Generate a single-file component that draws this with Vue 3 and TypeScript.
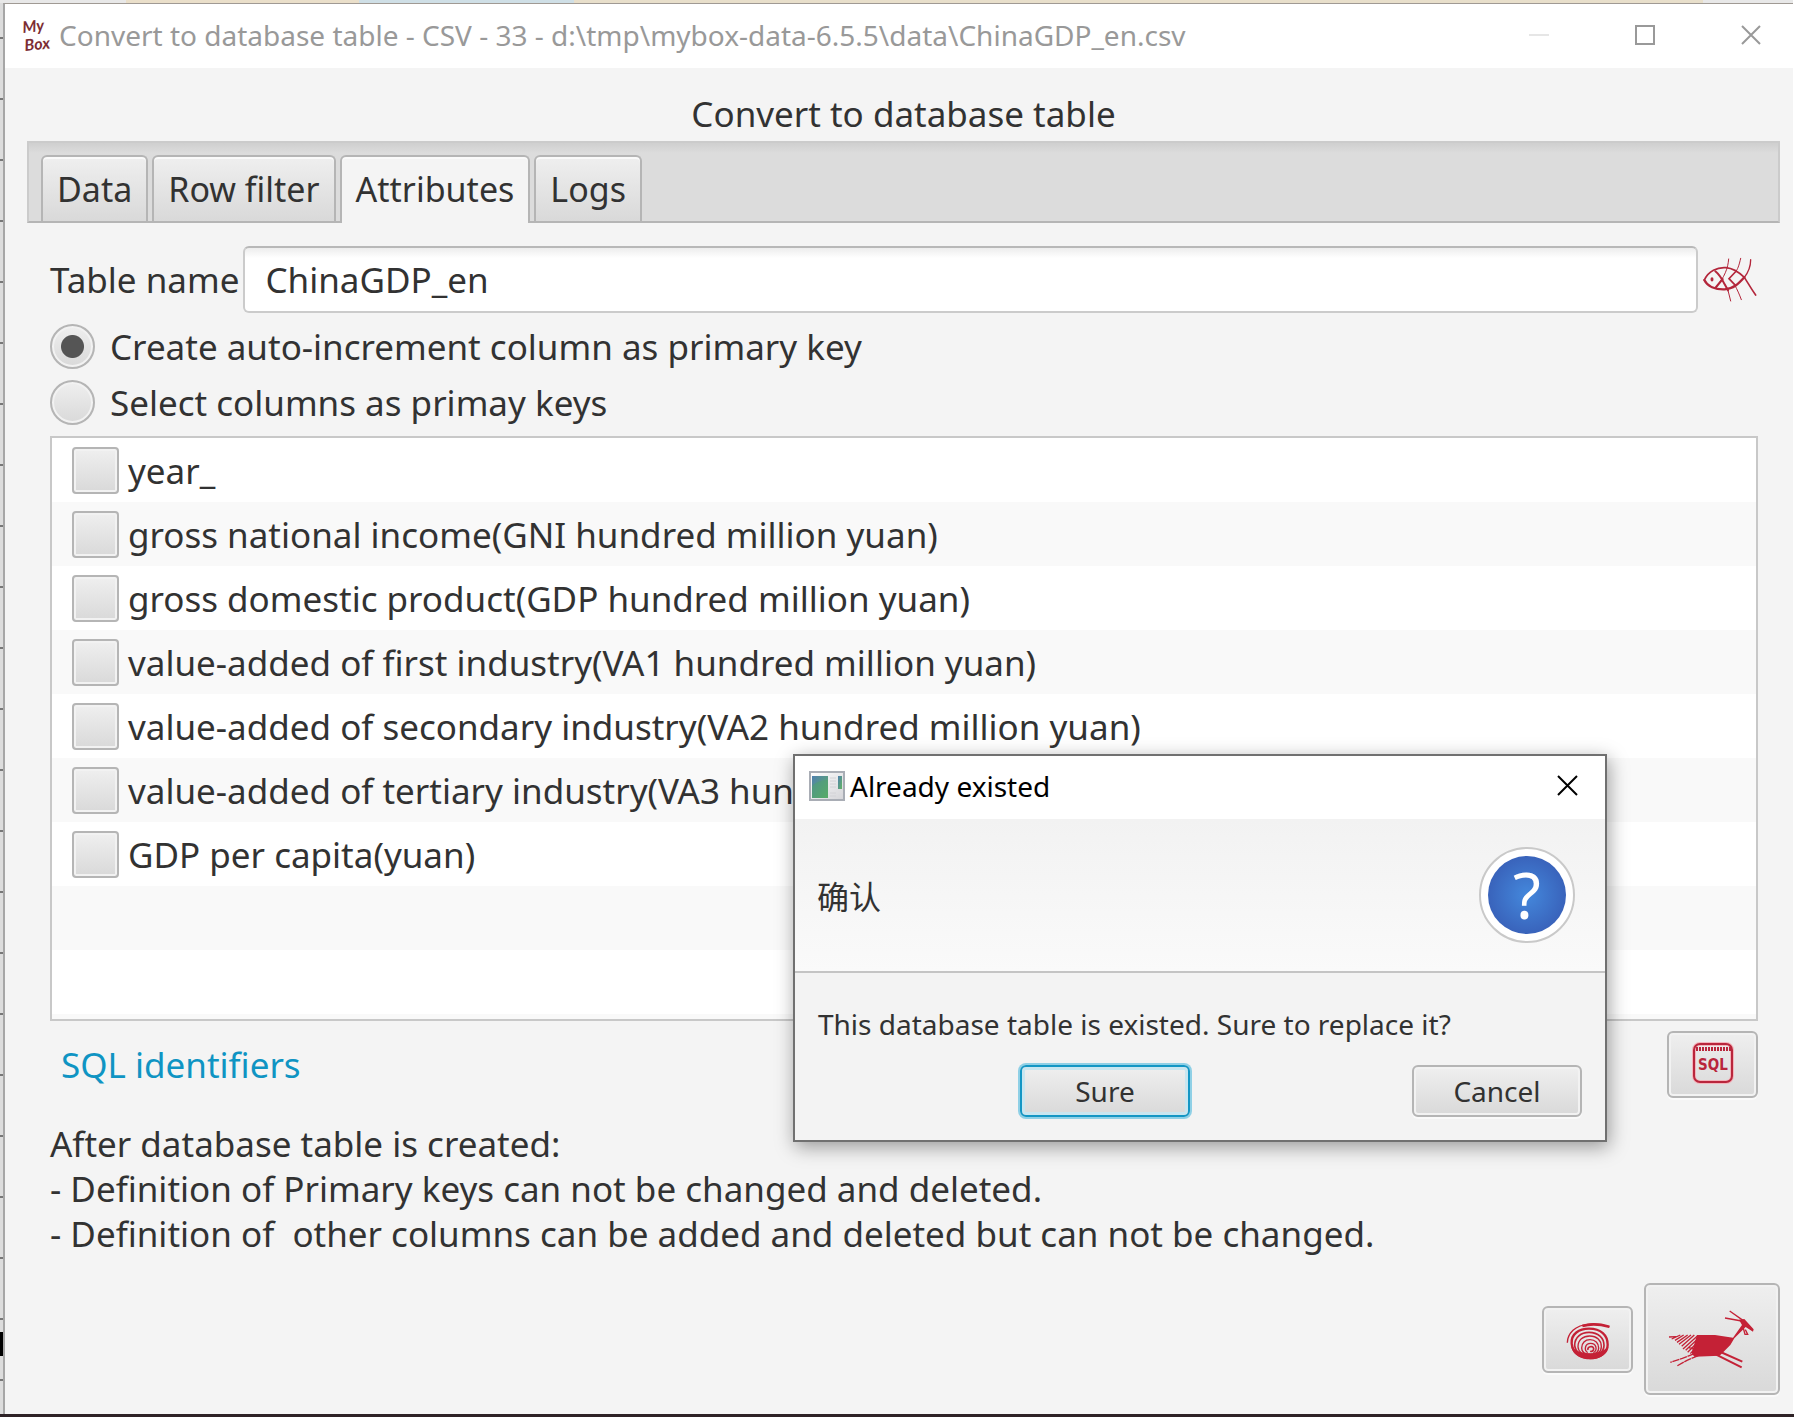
<script setup lang="ts">
import { ref } from 'vue'

interface Column {
  id: string
  label: string
}

const tabs: string[] = ['Data', 'Row filter', 'Attributes', 'Logs']
const activeTab = ref('Attributes')
const tableName = ref('ChinaGDP_en')
const keyMode = ref('auto')
const selected = ref<string[]>([])
const dialogOpen = ref(true)

const columns: Column[] = [
  { id: 'year', label: 'year_' },
  { id: 'gni', label: 'gross national income(GNI hundred million yuan)' },
  { id: 'gdp', label: 'gross domestic product(GDP hundred million yuan)' },
  { id: 'va1', label: 'value-added of first industry(VA1 hundred million yuan)' },
  { id: 'va2', label: 'value-added of secondary industry(VA2 hundred million yuan)' },
  { id: 'va3', label: 'value-added of tertiary industry(VA3 hundred million yuan)' },
  { id: 'capita', label: 'GDP per capita(yuan)' },
]

const notes = [
  'After database table is created:',
  '- Definition of Primary keys can not be changed and deleted.',
  '- Definition of  other columns can be added and deleted but can not be changed.',
].join('\n')
</script>

<template>
  <div class="desktop">
    <div class="behind-top"></div>
    <div class="behind-left"><i class="dark-mark"></i></div>
    <div class="window">
      <header class="titlebar">
        <svg class="logo" width="32" height="44" viewBox="0 0 32 44" aria-hidden="true">
          <g fill="#7c2d33" font-family="Lato, sans-serif" font-style="italic" font-weight="700">
            <text x="1" y="20" font-size="16" transform="rotate(-6 1 20)">My</text>
            <text x="3" y="38" font-size="16" transform="rotate(-6 3 38)">Box</text>
          </g>
        </svg>
        <span class="window-title">Convert to database table - CSV - 33 - d:\tmp\mybox-data-6.5.5\data\ChinaGDP_en.csv</span>
        <div class="controls">
          <button class="ctl" aria-label="Minimize" disabled>
            <svg width="22" height="22" viewBox="0 0 22 22"><path d="M1 11H21" stroke="#e6e6e6" stroke-width="2" /></svg>
          </button>
          <button class="ctl" aria-label="Maximize">
            <svg width="22" height="22" viewBox="0 0 22 22"><rect x="2" y="2" width="18" height="18" fill="none" stroke="#999" stroke-width="2" /></svg>
          </button>
          <button class="ctl" aria-label="Close window">
            <svg width="22" height="22" viewBox="0 0 22 22"><path d="M2 2L20 20M20 2L2 20" stroke="#999" stroke-width="2" /></svg>
          </button>
        </div>
      </header>

      <main class="content">
        <h1 class="heading">Convert to database table</h1>

        <div class="tabbar" role="tablist">
          <button
            v-for="tab in tabs"
            :key="tab"
            class="tab"
            :class="{ active: tab === activeTab }"
            role="tab"
            :aria-selected="tab === activeTab"
            @click="activeTab = tab"
          >{{ tab }}</button>
        </div>

        <section class="panel">
          <div class="name-row">
            <label for="table-name">Table name</label>
            <input id="table-name" v-model="tableName" class="name-input" type="text" />
            <svg class="fish" width="56" height="46" viewBox="36 26 168 138" fill="none" stroke="#b3263b" stroke-width="5" stroke-linecap="round" aria-hidden="true">
              <path d="M43 95C55 68 82 56 108 58C132 60 148 73 163 87" />
              <path d="M43 95C52 114 76 124 104 123C130 122 146 106 163 87" stroke-width="7" />
              <path d="M76 69C90 80 97 94 104 108L114 126" stroke-width="6" />
              <path d="M114 126L122 158" stroke-width="3" />
              <path d="M116 32C114 60 104 86 78 117" stroke-width="3" />
              <path d="M98 92L76 119" stroke-width="6" />
              <path d="M152 30C147 52 143 64 136 71" stroke-width="3" />
              <path d="M136 71L117 91L137 112" />
              <path d="M134 110C142 124 148 138 154 154" stroke-width="3" />
              <path d="M182 34C182 58 173 74 163 87" stroke-width="4" />
              <path d="M163 87C174 104 184 122 197 140" />
              <ellipse cx="66" cy="93" rx="2" ry="4" />
            </svg>
          </div>

          <label class="radio-row">
            <input v-model="keyMode" type="radio" name="key-mode" value="auto" />
            <span>Create auto-increment column as primary key</span>
          </label>
          <label class="radio-row">
            <input v-model="keyMode" type="radio" name="key-mode" value="select" />
            <span>Select columns as primay keys</span>
          </label>

          <ul class="list">
            <li v-for="col in columns" :key="col.id">
              <label>
                <input v-model="selected" type="checkbox" :value="col.id" />
                <span>{{ col.label }}</span>
              </label>
            </li>
            <li></li>
            <li></li>
            <li class="partial"></li>
          </ul>

          <div class="link-row">
            <a href="#sql-identifiers">SQL identifiers</a>
            <button class="btn icon-btn" aria-label="Show SQL">
              <svg width="42" height="42" viewBox="0 0 42 42" aria-hidden="true">
                <rect x="2" y="2" width="38" height="38" rx="6" fill="none" stroke="#f3b4bb" stroke-width="4" />
                <rect x="2" y="2" width="38" height="38" rx="6" fill="none" stroke="#b9263c" stroke-width="2" />
                <path d="M4 7H39" stroke="#b9263c" stroke-width="4" stroke-dasharray="2 1" />
                <text x="21" y="28" text-anchor="middle" font-family="'DejaVu Sans Condensed', 'Liberation Sans', sans-serif" font-size="15" font-weight="700" fill="#b9263c">SQL</text>
              </svg>
            </button>
          </div>

          <p class="notes">{{ notes }}</p>
        </section>

        <footer class="actions">
          <button class="btn icon-btn" aria-label="Cancel task">
            <svg width="44" height="38" viewBox="199 248 132 114" fill="none" stroke="#c42136" aria-hidden="true">
              <path d="M330 263C296 250 244 249 220 273C207 286 203 298 203 310" stroke-width="4" />
              <path d="M329 262C300 254 270 253 248 260" stroke-width="8" />
              <path d="M216 312C214 284 238 268 268 268C304 268 324 288 324 316C324 340 302 356 272 356C240 356 218 338 216 312Z" stroke-width="7" />
              <path d="M225 318C225 294 244 279 268 279C296 279 313 296 313 318C313 338 296 351 272 351C246 351 227 338 225 318Z" stroke-width="5" />
              <path d="M235 322C235 302 250 290 270 290C292 290 305 304 305 322C305 338 292 348 272 348C250 348 236 338 235 322Z" stroke-width="4" />
              <path d="M246 326C246 311 256 301 271 301C287 301 297 312 297 326C297 338 287 345 272 345C256 345 246 338 246 326Z" stroke-width="4" />
              <path d="M264 340C252 332 256 312 273 312C290 312 295 332 281 340" stroke-width="4" />
              <path d="M265 332C262 322 280 317 282 328C282 334 276 338 272 335" stroke-width="5" />
              <path d="M214 322C240 348 300 348 326 322C320 350 296 360 272 360C246 360 222 350 214 322Z" fill="#c42136" stroke="none" />
            </svg>
          </button>
          <button class="btn go-btn" aria-label="Start">
            <svg width="90" height="60" viewBox="506 214 270 180" fill="none" stroke="#c42136" aria-hidden="true">
              <path d="M596 292L650 292L704 300L731 262L722 246L738 244L766 275L764 282L742 268L708 302L696 322L664 354L588 357L580 346Z" fill="#c42136" stroke="none" />
              <path d="M694 220L734 248M680 241L730 250M734 268L740 290L748 290L741 276" stroke-width="4" />
              <path d="M660 340L732 372M652 350L730 389" stroke-width="6" />
              <path d="M588 348L552 362L516 374M600 354L566 368L536 385" stroke-width="4" stroke-dasharray="22 2" />
              <path d="M512 298L534 297M520 304L546 292M530 308L556 292M536 314L568 292M542 320L578 292M550 326L588 292M554 334L598 294M562 338L598 304M568 344L598 314M576 348L598 324M572 330L590 336" stroke-width="4" />
            </svg>
          </button>
        </footer>
      </main>
    </div>

    <div v-if="dialogOpen" class="dialog" role="dialog" aria-labelledby="dialog-title">
      <header class="dialog-bar">
        <svg width="36" height="30" viewBox="0 0 36 30" aria-hidden="true">
          <defs>
            <linearGradient id="pane" x1="0" y1="0" x2="1" y2="1">
              <stop offset="0" stop-color="#4f7fae" />
              <stop offset="1" stop-color="#62b562" />
            </linearGradient>
            <linearGradient id="frame" x1="0" y1="0" x2="1" y2="1">
              <stop offset="0" stop-color="#fff" />
              <stop offset="1" stop-color="#d4d4d8" />
            </linearGradient>
          </defs>
          <rect x="1" y="1" width="34" height="28" fill="url(#frame)" stroke="#a9adb5" stroke-width="2" />
          <rect x="3" y="5" width="16" height="22" fill="url(#pane)" />
          <path d="M3 15C8 10 14 9 19 9V27H3Z" fill="#4ea36c" opacity=".5" />
          <path d="M21 7H27M21 10H27M21 13H27M21 16H27M21 22H27M21 25H27" stroke="#d2d2d6" />
          <rect x="29" y="5" width="4" height="13" fill="url(#pane)" />
        </svg>
        <span id="dialog-title" class="dialog-title">Already existed</span>
        <button class="dialog-close" aria-label="Close dialog" @click="dialogOpen = false">
          <svg width="22" height="22" viewBox="0 0 22 22"><path d="M1 1L20 20M20 1L1 20" stroke="#000" stroke-width="2" /></svg>
        </button>
      </header>
      <div class="dialog-head">
        <span lang="zh">确认</span>
        <svg width="98" height="98" viewBox="0 0 98 98" aria-hidden="true">
          <defs>
            <radialGradient id="ball">
              <stop offset="0" stop-color="#4488dc" />
              <stop offset="1" stop-color="#3963bb" />
            </radialGradient>
          </defs>
          <circle cx="49" cy="49" r="47" fill="#fff" stroke="#c9c9c9" stroke-width="2" />
          <circle cx="49" cy="49" r="39" fill="url(#ball)" />
          <text x="49" y="73" text-anchor="middle" font-family="'Noto Sans', sans-serif" font-size="64" fill="#fff">?</text>
        </svg>
      </div>
      <div class="dialog-body">
        <p>This database table is existed. Sure to replace it?</p>
        <div class="dialog-actions">
          <button class="btn dlg-btn focused" @click="dialogOpen = false">Sure</button>
          <button class="btn dlg-btn" @click="dialogOpen = false">Cancel</button>
        </div>
      </div>
    </div>
  </div>
</template>

<style>
body {
  background: #fff;
}
</style>

<style scoped>
* {
  box-sizing: border-box;
}

.desktop {
  position: relative;
  display: grid;
  grid-template-columns: 3px 1fr;
  grid-template-rows: 3px 1fr;
  min-height: 100vh;
  padding-right: 1px;
  border-bottom: 3px solid #2e2226;
  font-family: 'Noto Sans', 'Noto Sans CJK SC', sans-serif;
  font-size: 35px;
  color: #323232;
}

.behind-top {
  grid-column: 1 / 3;
  background: linear-gradient(90deg, #e8e8e8 7%, #eadfca 7% 20%, #cfdfe6 20% 32%, #e8dfcb 32% 95%, #e8e8e8 95%);
}

.behind-left {
  display: flex;
  flex-direction: column;
  justify-content: flex-end;
  padding-bottom: 58px;
  background: repeating-linear-gradient(#dcdcdc 0 34px, #777 34px 36px, #dcdcdc 36px 61px);
}

.dark-mark {
  height: 24px;
  background: #000;
}

.window {
  display: flex;
  flex-direction: column;
  min-width: 0;
  border-top: 1px solid #a09a94;
  border-left: 2px solid #a6a6a6;
  background: #f4f4f4;
}

.titlebar {
  display: flex;
  align-items: center;
  height: 64px;
  padding: 0 0 2px 17px;
  background: #fff;
}

.logo {
  flex: none;
}

.window-title {
  flex: 1;
  margin-left: 5px;
  font-size: 28px;
  line-height: 40px;
  color: #999;
  white-space: nowrap;
}

.controls {
  display: flex;
  gap: 22px;
}

.ctl {
  display: flex;
  align-items: center;
  justify-content: center;
  width: 84px;
  height: 62px;
  padding: 0;
  border: 0;
  background: none;
}

.content {
  flex: 1;
  display: flex;
  flex-direction: column;
  padding: 23px 13px 19px 22px;
}

.heading {
  margin: 0 0 4px;
  font-size: 35px;
  font-weight: 400;
  line-height: 46px;
  text-align: center;
}

.tabbar {
  display: flex;
  gap: 4px;
  height: 82px;
  padding: 12px 12px 0;
  border: 2px solid #cbcbcb;
  border-bottom-color: #b5b5b5;
  background: linear-gradient(#cfcfcf, #dcdcdc 10px);
  font-size: 34px;
}

.tab {
  padding: 0 14px;
  border: 2px solid #b5b5b5;
  border-bottom: 0;
  border-radius: 6px 6px 0 0;
  background: linear-gradient(#efefef, #d9d9d9);
  box-shadow: inset 0 2px 0 #fafafa;
  font: inherit;
  color: inherit;
  white-space: nowrap;
}

.tab.active {
  margin-bottom: -2px;
  padding-bottom: 2px;
  background: #f4f4f4;
}

.panel {
  display: flex;
  flex-direction: column;
  gap: 10px;
  padding: 23px 22px 24px 23px;
}

.name-row {
  display: flex;
  align-items: center;
  gap: 4px;
}

.name-row label {
  white-space: nowrap;
}

.name-input {
  flex: 1;
  min-width: 0;
  height: 67px;
  padding: 0 20px;
  border: 2px solid #cbcbcb;
  border-top-color: #b8b8b8;
  border-radius: 6px;
  background: linear-gradient(#ededed, #fff 10px);
  font: inherit;
  color: inherit;
  outline: 0;
}

.fish {
  flex: none;
}

.radio-row {
  display: flex;
  align-items: center;
  gap: 15px;
  height: 46px;
}

.radio-row input,
.list input {
  appearance: none;
  flex: none;
  margin: 0;
  border: 2px solid #b5b5b5;
  background: linear-gradient(#efefef, #d9d9d9);
  box-shadow: inset 0 0 0 2px #f2f2f2;
}

.radio-row input {
  width: 45px;
  height: 45px;
  border-radius: 50%;
}

.radio-row input:checked {
  background: radial-gradient(circle, #555 11px, transparent 12px), linear-gradient(#efefef, #d9d9d9);
}

.list {
  margin: 1px 0 0;
  padding: 0;
  border: 2px solid #c8c8c8;
  background: #fff;
  list-style: none;
}

.list li {
  height: 64px;
  padding-left: 20px;
}

.list li:nth-child(even) {
  background: #f9f9f9;
}

.list .partial {
  height: 5px;
}

.list label {
  display: flex;
  align-items: center;
  gap: 9px;
  height: 100%;
}

.list input {
  width: 47px;
  height: 47px;
  border-radius: 4px;
}

.link-row {
  display: flex;
  align-items: center;
  justify-content: space-between;
  padding-left: 11px;
}

.link-row a {
  color: #0f94c3;
  text-decoration: none;
}

.btn {
  display: flex;
  align-items: center;
  justify-content: center;
  padding: 0;
  border: 2px solid #b5b5b5;
  border-radius: 6px;
  background: linear-gradient(#efefef, #d9d9d9);
  box-shadow: inset 0 0 0 2px #f2f2f2, 0 2px 0 #fafafa;
  font: inherit;
  color: inherit;
}

.icon-btn {
  width: 91px;
  height: 67px;
}

.link-row .icon-btn svg {
  margin-bottom: 4px;
}

.notes {
  margin: 13px 0 0;
  line-height: 45px;
  white-space: pre-wrap;
}

.actions {
  display: flex;
  align-items: center;
  justify-content: flex-end;
  gap: 11px;
  margin-top: auto;
}

.actions .icon-btn svg {
  margin-top: 4px;
}

.go-btn {
  width: 136px;
  height: 112px;
}

.dialog {
  position: absolute;
  top: 754px;
  left: 793px;
  display: flex;
  flex-direction: column;
  width: 814px;
  border: 2px solid #707070;
  background: #f3f3f3;
  box-shadow: 2px 5px 18px rgba(0, 0, 0, 0.38);
  font-size: 28px;
}

.dialog-bar {
  display: flex;
  align-items: center;
  height: 63px;
  padding: 0 26px 3px 14px;
  background: #fff;
}

.dialog-title {
  flex: 1;
  margin-left: 5px;
  color: #000;
}

.dialog-close {
  display: flex;
  padding: 0;
  border: 0;
  background: none;
}

.dialog-head {
  display: flex;
  align-items: center;
  justify-content: space-between;
  height: 154px;
  padding: 0 29px 0 22px;
  border-bottom: 2px solid #c4c4c4;
  background: linear-gradient(#f2f2f2, #fafafa);
  font-size: 32px;
}

.dialog-body {
  padding: 31px 23px 23px;
}

.dialog-body p {
  margin: 0 0 21px;
  line-height: 40px;
}

.dialog-actions {
  display: flex;
  justify-content: space-between;
  padding-left: 202px;
}

.dlg-btn {
  width: 170px;
  height: 52px;
}

.focused {
  border-color: #1496c4;
  box-shadow: inset 0 0 0 3px #c9e6f0, 0 0 0 2px #8fd0e6;
  outline: 0;
}
</style>
